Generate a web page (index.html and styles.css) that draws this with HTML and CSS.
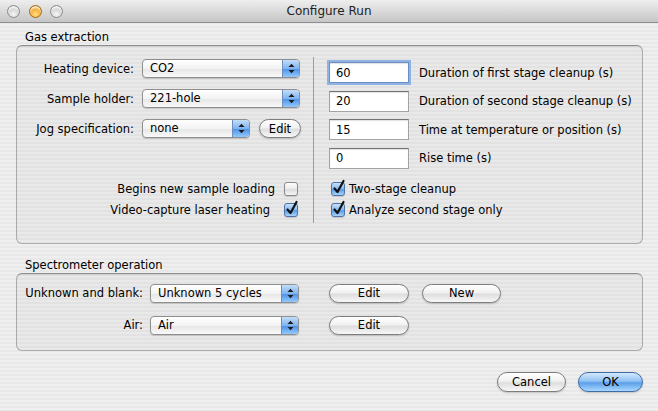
FILE: index.html
```html
<!DOCTYPE html>
<html lang="en">
  <head>
    <meta charset="UTF-8" />
    <title>Configure Run</title>
    <link rel="stylesheet" href="styles.css">
  </head>
  <body>
    <div class="window">
      <!-- Barre de titre -->
      <div class="titlebar">
        <div class="lights">
          <span class="light"></span>
          <span class="light light-orange"></span>
          <span class="light"></span>
        </div>
        <div class="title">Configure Run</div>
        <div></div>
      </div>

      <div class="content">
        <div class="group-label">Gas extraction</div>
        <div class="group group-gas">
          <div class="gas-left">
            <div class="form-grid">
              <label class="form-label">Heating device:</label>
              <div class="popup popup-wide">
                <span class="popup-text">CO2</span>
                <span class="popup-arrows"><svg width="7" height="11" viewBox="0 0 7 11"><polygon points="0.5,4 3.5,0.8 6.5,4" /><polygon points="0.5,7 3.5,10.2 6.5,7" /></svg></span>
              </div>
              <label class="form-label">Sample holder:</label>
              <div class="popup popup-wide">
                <span class="popup-text">221-hole</span>
                <span class="popup-arrows"><svg width="7" height="11" viewBox="0 0 7 11"><polygon points="0.5,4 3.5,0.8 6.5,4" /><polygon points="0.5,7 3.5,10.2 6.5,7" /></svg></span>
              </div>
              <label class="form-label">Jog specification:</label>
              <div class="jog-row">
                <div class="popup popup-jog">
                  <span class="popup-text">none</span>
                  <span class="popup-arrows"><svg width="7" height="11" viewBox="0 0 7 11"><polygon points="0.5,4 3.5,0.8 6.5,4" /><polygon points="0.5,7 3.5,10.2 6.5,7" /></svg></span>
                </div>
                <button class="btn btn-small">Edit</button>
              </div>
            </div>
          </div>

          <div class="divider"></div>

          <div class="gas-right">
            <div class="field-row">
              <input class="field field-focus" type="text" value="60" />
              <span>Duration of first stage cleanup (s)</span>
            </div>
            <div class="field-row">
              <input class="field" type="text" value="20" />
              <span>Duration of second stage cleanup (s)</span>
            </div>
            <div class="field-row">
              <input class="field" type="text" value="15" />
              <span>Time at temperature or position (s)</span>
            </div>
            <div class="field-row">
              <input class="field" type="text" value="0" />
              <span>Rise time (s)</span>
            </div>
          </div>

          <div class="checks-left">
            <div class="check-row">
              <span>Begins new sample loading</span>
              <span class="checkbox"></span>
            </div>
            <div class="check-row check-row-wide">
              <span>Video-capture laser heating</span>
              <span class="checkbox checked"><svg width="16" height="17" viewBox="0 0 16 17"><path d="M3.5 9.5 L6.5 13 L12.5 2" /></svg></span>
            </div>
          </div>

          <div class="checks-right">
            <div class="check-row">
              <span class="checkbox checked"><svg width="16" height="17" viewBox="0 0 16 17"><path d="M3.5 9.5 L6.5 13 L12.5 2" /></svg></span>
              <span>Two-stage cleanup</span>
            </div>
            <div class="check-row">
              <span class="checkbox checked"><svg width="16" height="17" viewBox="0 0 16 17"><path d="M3.5 9.5 L6.5 13 L12.5 2" /></svg></span>
              <span>Analyze second stage only</span>
            </div>
          </div>
        </div>

        <div class="group-label group-label-second">Spectrometer operation</div>
        <div class="group group-spectro">
          <label class="form-label">Unknown and blank:</label>
          <div class="popup">
            <span class="popup-text">Unknown 5 cycles</span>
            <span class="popup-arrows"><svg width="7" height="11" viewBox="0 0 7 11"><polygon points="0.5,4 3.5,0.8 6.5,4" /><polygon points="0.5,7 3.5,10.2 6.5,7" /></svg></span>
          </div>
          <button class="btn btn-edit">Edit</button>
          <button class="btn btn-new">New</button>

          <label class="form-label">Air:</label>
          <div class="popup">
            <span class="popup-text">Air</span>
            <span class="popup-arrows"><svg width="7" height="11" viewBox="0 0 7 11"><polygon points="0.5,4 3.5,0.8 6.5,4" /><polygon points="0.5,7 3.5,10.2 6.5,7" /></svg></span>
          </div>
          <button class="btn btn-edit">Edit</button>
        </div>

        <div class="actions">
          <button class="btn btn-cancel">Cancel</button>
          <button class="btn btn-ok">OK</button>
        </div>
      </div>
    </div>
  </body>
</html>
```

FILE: styles.css
```css
/* Base */
html,
body {
  margin: 0;
  padding: 0;
  font-family: "DejaVu Sans", sans-serif;
  font-size: 11px;
  color: #000;
}

/* Fenetre avec fond raye */
.window {
  width: 658px;
  height: 411px;
  overflow: hidden;
  background: repeating-linear-gradient(
    to bottom,
    #efefef 0,
    #efefef 2px,
    #e8e8e8 2px,
    #e8e8e8 4px
  );
}

/* Barre de titre */
.titlebar {
  height: 22px;
  border-bottom: 1px solid #8e8e8e;
  background: linear-gradient(#eeeeee, #d6d6d6 60%, #c6c6c6);
  display: grid;
  grid-template-columns: 1fr auto 1fr;
  align-items: center;
}

.title {
  font-size: 12px;
  color: #222;
}

.lights {
  display: flex;
  gap: 8.5px;
  padding-left: 7px;
}

.light {
  width: 13px;
  height: 13px;
  box-sizing: border-box;
  border-radius: 50%;
  border: 1px solid #8b8b8b;
  background: radial-gradient(circle at 50% 75%, #f7f7f7, #d2d2d2 55%, #a9a9a9);
  box-shadow: inset 0 2px 2px rgba(255, 255, 255, 0.9);
}

.light-orange {
  border-color: #a8670c;
  background: radial-gradient(circle at 50% 75%, #ffe28a, #f5a52a 55%, #c9740c);
}

/* Contenu */
.content {
  padding: 7px 15px 0 16px;
}

.group-label {
  height: 15px;
  line-height: 15px;
  padding-left: 9px;
  font-size: 11.5px;
}

.group-label-second {
  margin-top: 14px;
}

.group {
  border: 1px solid #ababab;
  border-top-color: #8c8c8c;
  border-radius: 6px;
  background: rgba(0, 0, 0, 0.025);
  box-shadow: inset 0 1px 1px rgba(0, 0, 0, 0.08);
}

/* Groupe extraction */
.group-gas {
  padding-top: 11px;
  box-sizing: border-box;
  height: 199px;
  display: grid;
  grid-template-columns: 296px 1px 1fr;
  grid-template-rows: 114px 52px;
}

.gas-left {
  padding-top: 2px;
}

.form-grid {
  display: grid;
  grid-template-columns: 117px auto;
  column-gap: 8px;
  row-gap: 11px;
  align-items: center;
  justify-items: start;
}

.form-label {
  justify-self: end;
  font-size: 11.5px;
}

.jog-row {
  display: flex;
  align-items: center;
  gap: 9px;
}

.divider {
  grid-row: 1 / 3;
  grid-column: 2;
  background: #9c9c9c;
}

.gas-right {
  padding: 5px 0 0 15px;
  display: flex;
  flex-direction: column;
  gap: 7.5px;
}

.field-row {
  display: flex;
  align-items: center;
  gap: 10px;
  font-size: 11.5px;
}

.field {
  width: 80px;
  height: 21px;
  box-sizing: border-box;
  margin: 0;
  padding: 0 0 0 6px;
  border: 1px solid #a3a3a3;
  border-top-color: #737373;
  background: #fff;
  font: inherit;
  box-shadow: inset 0 1px 1px rgba(0, 0, 0, 0.12);
}

.field-focus {
  border-color: #6b8fc4;
  box-shadow: 0 0 0 2px #8fb3e3, inset 0 1px 1px rgba(0, 0, 0, 0.12);
}

/* Cases a cocher */
.checks-left {
  grid-row: 2;
  grid-column: 1;
  padding: 7px 15px 0 0;
  display: flex;
  flex-direction: column;
  align-items: flex-end;
}

.checks-right {
  grid-row: 2;
  grid-column: 3;
  padding: 7px 0 0 17px;
  display: flex;
  flex-direction: column;
}

.check-row {
  height: 21px;
  display: flex;
  align-items: center;
  gap: 9px;
  font-size: 11.5px;
}

.checks-right .check-row {
  gap: 4px;
}

.check-row-wide {
  gap: 14px;
}

.checkbox {
  width: 14px;
  height: 14px;
  box-sizing: border-box;
  border: 1px solid #8a8a8a;
  border-radius: 3px;
  background: linear-gradient(#ffffff, #eaeaea 50%, #dcdcdc 55%, #f6f6f6);
  box-shadow: 0 1px 1px rgba(0, 0, 0, 0.15);
  position: relative;
}

.checkbox.checked {
  border-color: #4d74a8;
  background: linear-gradient(#c9e0f8, #84b7ee 50%, #5a9be6 55%, #a8d4fb);
}

.checkbox svg {
  position: absolute;
  left: -1px;
  top: -4px;
}

.checkbox path {
  fill: none;
  stroke: #111;
  stroke-width: 2.2;
  stroke-linecap: round;
  stroke-linejoin: round;
}

/* Menus deroulants */
.popup {
  height: 19px;
  box-sizing: border-box;
  display: flex;
  border: 1px solid #8f8f8f;
  border-radius: 4px;
  background: linear-gradient(#ffffff, #f3f3f3 50%, #e6e6e6 52%, #f9f9f9);
  box-shadow: 0 1px 1px rgba(0, 0, 0, 0.15);
  overflow: hidden;
}

.popup-wide {
  width: 158px;
}

.popup-jog {
  width: 108px;
}

.popup-text {
  flex: 1;
  padding-left: 7px;
  line-height: 17px;
  font-size: 11.5px;
}

.popup-arrows {
  width: 16px;
  display: flex;
  align-items: center;
  justify-content: center;
  border-left: 1px solid #6d8fbf;
  background: linear-gradient(#c4ddf8, #7fb4ef 50%, #4f93e6 53%, #93c8fb);
}

.popup-arrows svg {
  fill: #1b1b1b;
}

/* Boutons */
.btn {
  height: 19px;
  box-sizing: border-box;
  margin: 0;
  padding: 0;
  border: 1px solid #7d7d7d;
  border-radius: 10px;
  background: linear-gradient(#ffffff, #f1f1f1 45%, #dedede 55%, #f7f7f7);
  box-shadow: 0 1px 2px rgba(0, 0, 0, 0.2);
  font: inherit;
  font-size: 11.5px;
  color: #000;
}

.btn-small {
  width: 42px;
}

/* Groupe spectrometre */
.group-spectro {
  height: 78px;
  box-sizing: border-box;
  padding-top: 9px;
  display: grid;
  grid-template-columns: 126px 149px 103px 86px;
  grid-auto-rows: 20px;
  column-gap: 7px;
  row-gap: 12px;
  align-items: center;
}

.group-spectro .btn-edit {
  width: 80px;
  margin-left: 23px;
}

.group-spectro .btn-new {
  width: 79px;
  margin-left: 6px;
}

.group-spectro .form-label {
  padding-left: 8px;
}

/* Boutons du bas */
.actions {
  margin-top: 21px;
  display: flex;
  justify-content: flex-end;
  gap: 12px;
}

.btn-cancel {
  width: 69px;
  height: 20px;
}

.btn-ok {
  width: 65px;
  height: 20px;
  border-color: #3f6ca6;
  background: linear-gradient(#d3e7fc, #92c2f3 45%, #5d9fea 55%, #a9d8ff);
}
```
